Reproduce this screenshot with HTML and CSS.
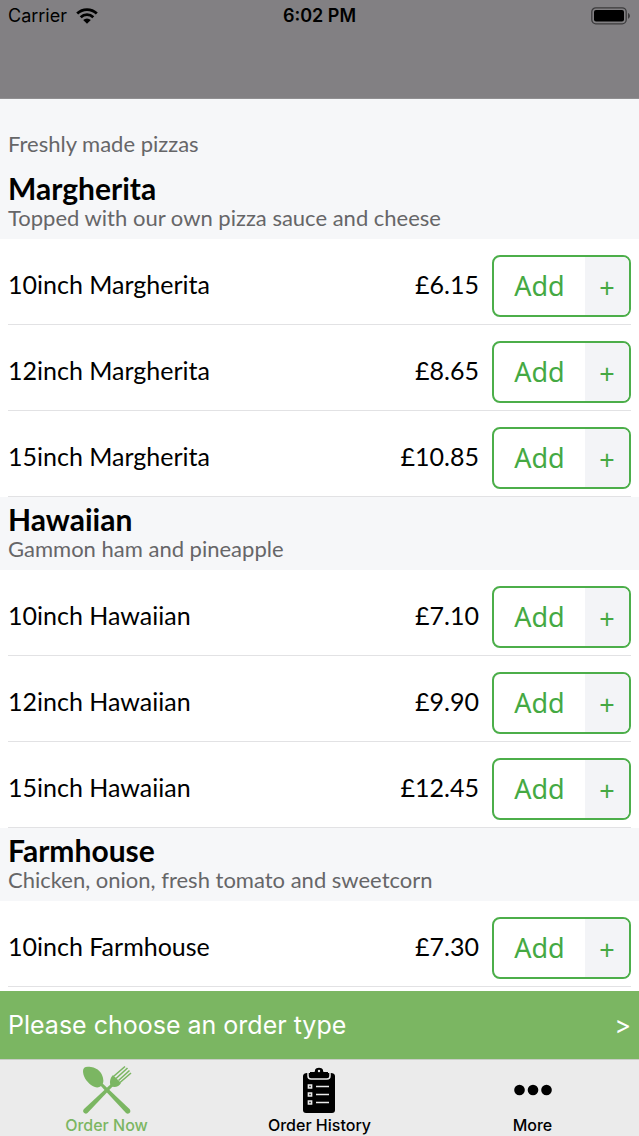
FILE: index.html
```html
<!DOCTYPE html>
<html lang="en">
<head>
    <meta charset="UTF-8">
    <meta name="viewport" content="width=device-width, initial-scale=1.0">
    <title>Order Now - Pizzas</title>
    <link rel="stylesheet" href="styles.css">
</head>
<body>

<header class="top-bar">
    <div class="status">
        <div class="carrier">
            <span>Carrier</span>
            <svg class="wifi" viewBox="0 0 22 16">
                <path d="M1.2 5.6a14.2 14.2 0 0 1 19.6 0M4.7 9.2a9.2 9.2 0 0 1 12.6 0" fill="none" stroke="#000" stroke-width="2.8"/>
                <path d="M7.2 12a5.4 5.4 0 0 1 7.6 0L11 15.8z"/>
            </svg>
        </div>
        <span class="time">6:02 PM</span>
        <div class="power">
            <svg class="battery" viewBox="0 0 40 18">
                <rect x="0.8" y="0.8" width="34.4" height="16" rx="4" fill="none" stroke="#3c3b3d" stroke-width="1.3"/>
                <rect x="3" y="3" width="30" height="11.6" rx="2"/>
                <path d="M37 6c2.6 1 2.6 4.8 0 5.8z" fill="#3c3b3d"/>
            </svg>
        </div>
    </div>
</header>

<main class="menu">
    <p class="intro">Freshly made pizzas</p>

    <section>
        <div class="group-head">
            <h2>Margherita</h2>
            <p>Topped with our own pizza sauce and cheese</p>
        </div>
        <ul class="items">
            <li class="item">
                <span class="name">10inch Margherita</span>
                <span class="price">£6.15</span>
                <div class="add-box"><button class="add">Add</button><button class="plus">+</button></div>
            </li>
            <li class="item">
                <span class="name">12inch Margherita</span>
                <span class="price">£8.65</span>
                <div class="add-box"><button class="add">Add</button><button class="plus">+</button></div>
            </li>
            <li class="item">
                <span class="name">15inch Margherita</span>
                <span class="price">£10.85</span>
                <div class="add-box"><button class="add">Add</button><button class="plus">+</button></div>
            </li>
        </ul>
    </section>

    <section>
        <div class="group-head">
            <h2>Hawaiian</h2>
            <p>Gammon ham and pineapple</p>
        </div>
        <ul class="items">
            <li class="item">
                <span class="name">10inch Hawaiian</span>
                <span class="price">£7.10</span>
                <div class="add-box"><button class="add">Add</button><button class="plus">+</button></div>
            </li>
            <li class="item">
                <span class="name">12inch Hawaiian</span>
                <span class="price">£9.90</span>
                <div class="add-box"><button class="add">Add</button><button class="plus">+</button></div>
            </li>
            <li class="item">
                <span class="name">15inch Hawaiian</span>
                <span class="price">£12.45</span>
                <div class="add-box"><button class="add">Add</button><button class="plus">+</button></div>
            </li>
        </ul>
    </section>

    <section>
        <div class="group-head">
            <h2>Farmhouse</h2>
            <p>Chicken, onion, fresh tomato and sweetcorn</p>
        </div>
        <ul class="items">
            <li class="item">
                <span class="name">10inch Farmhouse</span>
                <span class="price">£7.30</span>
                <div class="add-box"><button class="add">Add</button><button class="plus">+</button></div>
            </li>
        </ul>
    </section>
</main>

<button class="order-type">
    <span>Please choose an order type</span>
    <span>&gt;</span>
</button>

<nav class="tabs">
    <a href="#order" class="tab active">
        <svg viewBox="0 0 50 50">
            <!-- spoon -->
            <path d="M1 6C1 2 4 1 9 2c7 1 11 6 12 11 1 4 0 6-2 8s-6 2-10-1C4 16 1 11 1 6z"/>
            <path d="M17 19l2-2 28.5 27c2.5 3-1 6-3.500 4z"/>
            <!-- fork -->
            <path d="M32 20l-2-2L2 44c-2.500 3 1 6 3.500 4z"/>
            <path d="M31 10l8 8c-2 4-7 5-10 3-2-3-1-8 2-11z"/>
            <path d="M32 11L43 1.500M34 13.500L45.500 3M36.500 15.500L47.500 5.500M38 17.500L49 8" fill="none" stroke="#7bb662" stroke-width="1.6"/>
        </svg>
        <span>Order Now</span>
    </a>
    <a href="#history" class="tab">
        <svg viewBox="0 0 50 50">
            <path d="M12 8h24c2 0 4 1 4 3v34c0 2-1 3-3 3H11c-2 0-3-1-3-3V11c0-2 2-3 4-3z"/>
            <path d="M13 7v4c0 2 1 3 3 3h16c2 0 3-1 3-3V7" fill="none" stroke="#ebebeb" stroke-width="1.5"/>
            <path d="M15 7h4c1 0 1-1 1-2 1-3 7-3 8 0 0 1 0 2 1 2h4v3c0 1-1 2-2 2H17c-1 0-2-1-2-2z"/>
            <circle cx="24" cy="6" r="1.2" fill="#ebebeb"/>
            <path d="M13.500 20h3v3h-3zM13.500 28h3v3h-3zM13.500 36h3v3h-3zM21 21.500h13M21 29.500h13M21 37.500h13" fill="none" stroke="#ebebeb" stroke-width="1.7"/>
        </svg>
        <span>Order History</span>
    </a>
    <a href="#more" class="tab">
        <svg viewBox="0 0 50 50">
            <circle cx="11.500" cy="25" r="5.300"/>
            <circle cx="25" cy="25" r="5.300"/>
            <circle cx="38.500" cy="25" r="5.300"/>
        </svg>
        <span>More</span>
    </a>
</nav>

</body>
</html>
```
FILE: styles.css
```css
* {
    box-sizing: border-box;
}
body {
    margin: 0;
    height: 100vh;
    display: flex;
    flex-direction: column;
    font-family: Lato, sans-serif;
    background-color: #ffffff;
    color: #000000;
}
h2, p, ul {
    margin: 0;
    padding: 0;
}
button {
    border: none;
    padding: 0;
    background: none;
    cursor: pointer;
}

.top-bar {
    flex: none;
    padding: 4px 8px 70px;
    background-color: #828083;
    border-bottom: 1px solid #908f91;
    font-family: Inter, sans-serif;
}
.status {
    display: flex;
    font-size: 18px;
    line-height: 24px;
}
.carrier, .power {
    flex: 1;
    display: flex;
    align-items: center;
    gap: 9px;
}
.power {
    justify-content: flex-end;
}
.time {
    font-weight: 600;
}
.wifi {
    width: 22px;
    height: 16px;
}
.battery {
    width: 40px;
    height: 18px;
}

.menu {
    flex: 1;
    min-height: 0;
    overflow-y: auto;
    scrollbar-width: none;
}
.intro, .group-head {
    padding: 0 8px;
    background-color: #f6f7f9;
    color: #666668;
    font-size: 22px;
    line-height: 24px;
}
.intro {
    padding-top: 33px;
    padding-bottom: 10px;
}
.group-head {
    padding-top: 5px;
    padding-bottom: 9px;
}
.group-head h2 {
    color: #000000;
    font-size: 30px;
    line-height: 35px;
    font-weight: bold;
}
.items {
    list-style: none;
    padding: 0 8px;
}
.item {
    display: flex;
    align-items: center;
    height: 86px;
    padding-top: 8px;
    border-bottom: 1px solid #e2e2e4;
    font-size: 25px;
    line-height: 32px;
}
.name, .price {
    padding-bottom: 3px;
}
.name {
    flex: 1;
}
.price {
    margin-right: 13px;
}
.add-box {
    display: flex;
    width: 139px;
    height: 62px;
    border: 2px solid #4cae4a;
    border-radius: 8px;
    overflow: hidden;
}
.add, .plus {
    color: #45a943;
    font-family: "Noto Sans", sans-serif;
    font-size: 27px;
}
.add {
    flex: 1;
}
.plus {
    width: 44px;
    padding-top: 4px;
    background-color: #f3f4f7;
}

.order-type {
    flex: none;
    display: flex;
    justify-content: space-between;
    padding: 18px 8px;
    background-color: #7bb662;
    color: #ffffff;
    font-family: Inter, sans-serif;
    font-size: 25px;
    line-height: 32px;
}

.tabs {
    flex: none;
    display: flex;
    padding: 5px 0 1px;
    background-color: #ebebeb;
    border-top: 1px solid #c9cdc6;
}
.tab {
    flex: 1;
    display: flex;
    flex-direction: column;
    align-items: center;
    color: #000000;
    fill: #000000;
    font-family: Inter, sans-serif;
    font-size: 16px;
    line-height: 20px;
    font-weight: 500;
    text-decoration: none;
}
.tab svg {
    width: 50px;
    height: 50px;
}
.active {
    color: #7bb662;
    fill: #7bb662;
}
```
